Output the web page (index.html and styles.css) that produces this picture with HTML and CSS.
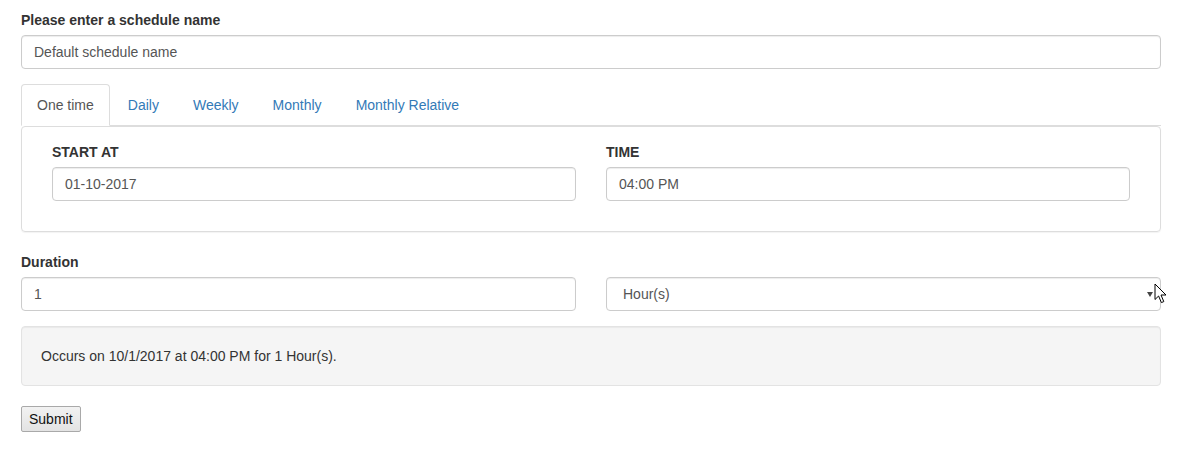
FILE: index.html
```html
<!DOCTYPE html>
<html>
<head>
<meta charset="utf-8">
<link rel="stylesheet" href="styles.css">
</head>
<body>
<div class="page">
  <form class="form">
    <div class="group">
      <label class="lbl">Please enter a schedule name</label>
      <div class="input">Default schedule name</div>
    </div>

    <ul class="tabs">
      <li class="tab active">One time</li>
      <li class="tab">Daily</li>
      <li class="tab">Weekly</li>
      <li class="tab">Monthly</li>
      <li class="tab">Monthly Relative</li>
    </ul>
    <div class="panel">
      <div class="cols">
        <div class="col">
          <label class="lbl">START AT</label>
          <div class="input">01-10-2017</div>
        </div>
        <div class="col">
          <label class="lbl">TIME</label>
          <div class="input">04:00 PM</div>
        </div>
      </div>
    </div>

    <label class="lbl">Duration</label>
    <div class="cols">
      <div class="input">1</div>
      <div class="input select">Hour(s)<span class="caret"></span>
        <svg class="cursor" width="14" height="21" viewBox="0 0 14 21"><path d="M1 1 L1 16.5 L4.6 13 L7.4 19.6 L9.8 18.6 L7 12 L12 12 Z" fill="#fff" stroke="#000" stroke-width="1" stroke-linejoin="miter"/></svg>
      </div>
    </div>

    <div class="well">Occurs on 10/1/2017 at 04:00 PM for 1 Hour(s).</div>

    <button type="button" class="btn">Submit</button>
  </form>
</div>
</body>
</html>
```

FILE: styles.css
```css
* { box-sizing: border-box; }
html, body { margin: 0; background: #fff; }
body {
  font-family: "Liberation Sans", Arial, Helvetica, sans-serif;
  font-size: 14px;
  line-height: 20px;
  color: #333;
}
.page {
  width: 1161px;
  padding: 10px 0 0 21px;
}
.form { display: flex; flex-direction: column; align-items: stretch; }
.group { display: flex; flex-direction: column; margin-bottom: 15px; }
.lbl {
  display: block;
  font-weight: bold;
  margin-bottom: 5px;
}
.input {
  position: relative;
  height: 34px;
  padding: 6px 12px;
  border: 1px solid #ccc;
  border-radius: 4px;
  color: #555;
  background: #fff;
  box-shadow: inset 0 1px 1px rgba(0,0,0,.075);
}
.tabs {
  list-style: none;
  margin: 0;
  padding: 0;
  display: flex;
  border-bottom: 1px solid #ddd;
}
.tab {
  margin-right: 2px;
  margin-bottom: -1px;
  padding: 10px 15px;
  border: 1px solid transparent;
  border-radius: 4px 4px 0 0;
  color: #337ab7;
}
.tab.active {
  color: #555;
  background: #fff;
  border-color: #ddd #ddd transparent;
}
.panel {
  margin-bottom: 20px;
  padding: 15px 30px 30px;
  border: 1px solid #ddd;
  border-radius: 4px;
  box-shadow: 0 1px 1px rgba(0,0,0,.05);
}
.cols {
  display: grid;
  grid-template-columns: 1fr 1fr;
  column-gap: 30px;
}
.col { display: flex; flex-direction: column; }
.select { padding-left: 16px; }
.caret {
  position: absolute;
  right: 7px;
  top: 14px;
  width: 0;
  height: 0;
  border-left: 3.5px solid transparent;
  border-right: 3.5px solid transparent;
  border-top: 5px solid #444;
}
.cursor {
  position: absolute;
  left: 547px;
  top: 5px;
}
.well {
  margin-top: 15px;
  margin-bottom: 20px;
  padding: 19px;
  background: #f5f5f5;
  border: 1px solid #e3e3e3;
  border-radius: 4px;
  box-shadow: inset 0 1px 1px rgba(0,0,0,.05);
}
.btn {
  align-self: flex-start;
  height: 26px;
  padding: 0 7px;
  font-family: "Liberation Sans", Arial, sans-serif;
  font-size: 14px;
  color: #111;
  background: linear-gradient(#f2f2f2, #e3e3e3);
  border: 1px solid #a9a9a9;
  border-radius: 2px;
}
```
